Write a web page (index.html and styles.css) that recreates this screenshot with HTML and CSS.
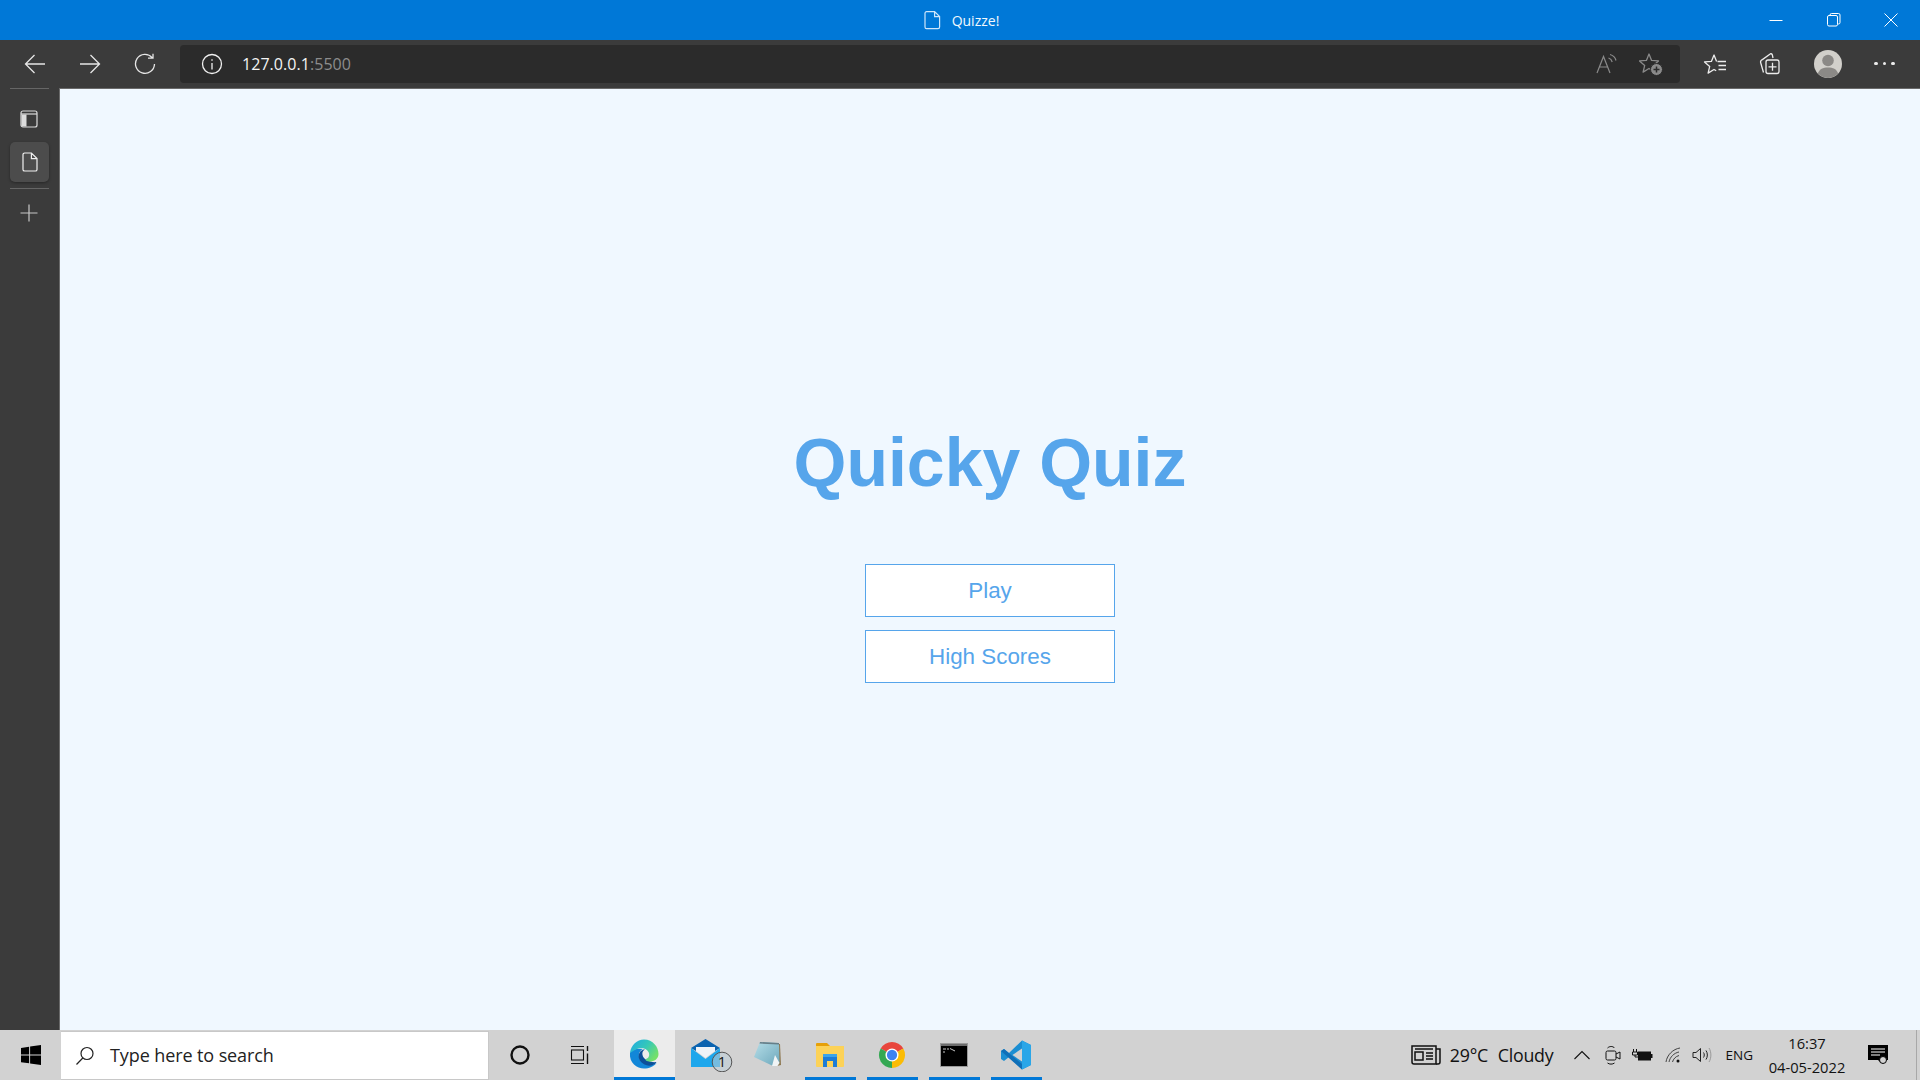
FILE: index.html
```html
<!DOCTYPE html>
<html lang="en">
<head>
<meta charset="utf-8">
<title>Quizze!</title>
<link rel="stylesheet" href="styles.css">
</head>
<body>
<header class="titlebar">
  <div></div>
  <div class="title-group">
    <svg width="18" height="20" viewBox="0 0 18 20" fill="none" stroke="#cfe6fa" stroke-width="1.2"><path d="M2.6 1.6h8l5 5V17a1.6 1.6 0 0 1-1.6 1.6H2.6A1.6 1.6 0 0 1 1 17V3.2a1.6 1.6 0 0 1 1.6-1.6zM10.6 1.600v5h5"/></svg>
    <span class="title-text">Quizze!</span>
  </div>
  <div class="win-controls">
    <span class="win-btn"><svg width="14" height="14" viewBox="0 0 14 14" stroke="#fff" fill="none"><path d="M0.5 7.5h13"/></svg></span>
    <span class="win-btn"><svg width="14" height="14" viewBox="0 0 14 14" stroke="#fff" fill="none"><rect x="0.5" y="2.5" width="10" height="10.5" rx="1.5"/><path d="M3 2.5V2A1.5 1.5 0 0 1 4.5 .5h7A1.500 1.500 0 0 1 13 2v7.500A1.500 1.500 0 0 1 11.500 11h-1"/></svg></span>
    <span class="win-btn"><svg width="14" height="14" viewBox="0 0 14 14" stroke="#fff" fill="none"><path d="M.5 .5l13 13M13.500 .5l-13 13"/></svg></span>
  </div>
</header>

<nav class="toolbar">
  <span class="nav-btn"><svg width="22" height="22" viewBox="0 0 22 22" fill="none" stroke="#e6e6e6" stroke-width="1.3"><path d="M21 11H1.5M10.5 2l-9 9 9 9"/></svg></span>
  <span class="nav-btn"><svg width="22" height="22" viewBox="0 0 22 22" fill="none" stroke="#e6e6e6" stroke-width="1.3"><path d="M1 11h19.5M11.500 2l9 9-9 9"/></svg></span>
  <span class="nav-btn"><svg width="22" height="22" viewBox="0 0 22 22" fill="none" stroke="#e6e6e6" stroke-width="1.3"><path d="M18.200 4.600A9.500 9.500 0 1 0 20.500 11M19 .8v4.400h-5"/></svg></span>
  <div class="address">
    <svg width="22" height="22" viewBox="0 0 22 22" fill="none" stroke="#f0f0f0" stroke-width="1.3"><circle cx="11" cy="11" r="9.5"/><path d="M11 10v6.500M11 6.200v1.600"/></svg>
    <span class="url">127.0.0.1<span class="port">:5500</span></span>
    <span class="address-spacer"></span>
    <svg width="22" height="22" viewBox="0 0 22 22" fill="none" stroke="#8a8a8a" stroke-width="1.2"><path d="M1 20L7.5 3.5 14 20M3.400 14h8.200M12.500 5c2 .6 3.200 2 3.700 4M14 1.500c3 .8 5.200 3 6 6"/></svg>
    <svg class="fav" width="24" height="24" viewBox="0 0 24 24" fill="none" stroke="#8a8a8a" stroke-width="1.3" stroke-linejoin="round"><path d="M10 2l2.600 6.400 6.900.5-5.200 4.500 1.600 6.700-5.900-3.600-5.900 3.600 1.600-6.700L.5 8.900l6.900-.5z"/><circle cx="17.500" cy="17.500" r="6" fill="#8a8a8a" stroke="#2b2b2b" stroke-width="1"/><path d="M17.500 14.500v6M14.500 17.500h6" stroke="#2b2b2b" stroke-width="1.5"/></svg>
  </div>
  <span class="tool-btn first"><svg width="24" height="22" viewBox="0 0 24 22" fill="none" stroke="#ececec" stroke-width="1.3" stroke-linejoin="round"><path d="M13.600 8.400L11 2 8.400 8.400l-6.900.5 5.200 4.500-1.600 6.700 5.900-3.600 2.200 1.300"/><path d="M14.500 8.500h8.500M15.500 12.500H23M15.500 16.500H23" stroke-width="1.500"/></svg></span>
  <span class="tool-btn"><svg width="22" height="22" viewBox="0 0 22 22" fill="none" stroke="#ececec" stroke-width="1.3"><path d="M5.500 19.500L2.700 9.800a2.500 2.500 0 0 1 1.700-3.200L11.800 1.200a1.500 1.500 0 0 1 2.500.5L15 5"/><rect x="8" y="7" width="13" height="13.500" rx="2"/><path d="M14.500 9.800v8M10.500 13.800h8"/></svg></span>
  <span class="avatar"><svg width="28" height="28" viewBox="0 0 28 28"><circle cx="14" cy="14" r="14" fill="#d2d0cb"/><circle cx="14" cy="10.500" r="5.800" fill="#8b8986"/><path d="M3.800 23.500C5.500 19 9 17.500 14 17.500s8.500 1.500 10.200 6A14 14 0 0 1 3.800 23.500z" fill="#8b8986"/></svg></span>
  <span class="dots"><i></i><i></i><i></i></span>
</nav>

<div class="workspace">
  <aside class="sidebar">
    <hr class="side-rule">
    <span class="side-ico first"><svg width="18" height="18" viewBox="0 0 18 18" fill="none" stroke="#dcdcdc" stroke-width="1.2"><rect x="1" y="1" width="16" height="16" rx="2"/><path d="M1 4h16"/><path d="M1.500 4.500h5v12h-4a1 1 0 0 1-1-1z" fill="#dcdcdc" stroke="none"/></svg></span>
    <span class="side-tab"><svg width="16" height="20" viewBox="0 0 16 20" fill="none" stroke="#f0f0f0" stroke-width="1.2"><path d="M2.600 1h6.800L15 6.600v10.800a1.600 1.600 0 0 1-1.600 1.600H2.600A1.600 1.600 0 0 1 1 17.400V2.600A1.600 1.600 0 0 1 2.600 1zM9.400 1v5.600H15"/></svg></span>
    <hr class="side-rule gap">
    <span class="side-ico plus"><svg width="18" height="18" viewBox="0 0 18 18" fill="none" stroke="#c8c8c8" stroke-width="1.2"><path d="M9 .5v17M.5 9h17"/></svg></span>
  </aside>
  <main class="page">
    <div class="home">
      <h1 class="quiz-title">Quicky Quiz</h1>
      <a class="quiz-btn">Play</a>
      <a class="quiz-btn">High Scores</a>
    </div>
  </main>
</div>

<footer class="taskbar">
  <span class="start"><svg width="20" height="20" viewBox="0 0 18 18" fill="#000"><path d="M0 2.600l7.300-1v7H0zM8.200 1.400L18 0v8.600H8.200zM0 9.500h7.300v7L0 15.500zM8.200 9.500H18V18l-9.800-1.300z"/></svg></span>
  <div class="search">
    <svg width="20" height="20" viewBox="0 0 20 20" fill="none" stroke="#222" stroke-width="1.2"><circle cx="12" cy="7.500" r="6"/><path d="M7.800 12L1.500 18.500"/></svg>
    <span class="search-text">Type here to search</span>
  </div>
  <span class="sys cortana"><svg width="20" height="20" viewBox="0 0 20 20" fill="none" stroke="#111" stroke-width="2.4"><circle cx="10" cy="10" r="8.500"/></svg></span>
  <span class="sys"><svg width="20" height="20" viewBox="0 0 20 20" fill="none" stroke="#111" stroke-width="1.1"><path d="M1 1.500h13M1 18.500h13"/><rect x="1.500" y="5" width="12" height="10"/><path d="M17.500 1v5M17.500 8.500V19" stroke-width="1.400"/></svg></span>

  <span class="app active"><svg width="30" height="30" viewBox="0 0 30 30"><defs><linearGradient id="eg" x1="0" y1="0" x2="1" y2=".6"><stop offset="0" stop-color="#1fa9e6"/><stop offset=".55" stop-color="#35c8b8"/><stop offset="1" stop-color="#74e06a"/></linearGradient></defs><path d="M1 14C0 24 8 29.500 15 29.500c5 0 10-2 12.500-5.500-3.500 2-7.500 2-10.500 1-5-1.500-8-6-7-10 .5-2.500 2-4 4-5C9 9 2 10 1 14z" fill="#1287d8"/><path d="M9.500 17c.5-5 4.500-7 6.500-6.500-3.500 1.500-3.500 6.500 0 9.500 3 2.500 8 3.500 11.500 3-2.500 4-8.500 4.500-12 2.500-4-2-6-5.500-6-8.500z" fill="#0c4f99"/><path d="M1 14C2 6 8 .5 15 .5 24 .5 29.500 8 29.500 15c0 5-4.500 7.500-8.500 7.500-3 0-5.500-1.500-4-2.500 3-1 4-4 2.500-7-2-3.500-7.500-5-11.500-3C5 11.500 2 13 1 14z" fill="url(#eg)"/></svg></span>
  <span class="app mail"><svg width="42" height="34" viewBox="0 0 42 34"><path d="M0 10L14.500 1 29 10l-5 3H5z" fill="#0a63b0"/><path d="M0 10l14.500 11L29 10v19H0z" fill="#1ea7ec"/><path d="M5 9h19v4l-9.500 7L5 13z" fill="#eef3f8"/><circle cx="31" cy="24" r="9.800" fill="rgba(190,205,215,.55)" stroke="#555" stroke-width="1"/><text x="31" y="29" class="badge-num" text-anchor="middle">1</text></svg></span>
  <span class="app"><svg width="30" height="28" viewBox="0 0 30 28"><defs><linearGradient id="np" x1="0" y1="0" x2="1" y2="1"><stop offset="0" stop-color="#b6dee8"/><stop offset="1" stop-color="#6ca7bb"/></linearGradient></defs><path d="M27 3l1 21-4 1 1-22z" fill="#8d7750"/><path d="M7 1l19 1 .5 20L20 25 1 16z" fill="url(#np)"/><path d="M7 1l19 1v1.500L6.500 2.500z" fill="#667e88"/><path d="M19 25l3-11 4.500 8-2 3z" fill="#f0f4f5"/></svg></span>
  <span class="app running"><svg width="28" height="24" viewBox="0 0 28 24"><path d="M0 1a1 1 0 0 1 1-1h10l3 3H0z" fill="#e6a008"/><path d="M0 3h28v20a1 1 0 0 1-1 1H1a1 1 0 0 1-1-1z" fill="#fcd257"/><path d="M7 14h14v10h-4v-6h-6v6H7z" fill="#1c7cd6"/><path d="M7 11h14v3H7z" fill="#3ba4ea"/></svg></span>
  <span class="app running"><svg width="28" height="28" viewBox="0 0 30 30"><path d="M15 15L2.900 8A14 14 0 0 1 27.100 8z" fill="#e8453c"/><path d="M15 15L27.100 8A14 14 0 0 1 15 29z" fill="#fbbc05"/><path d="M15 15V29A14 14 0 0 1 2.900 8z" fill="#34a853"/><circle cx="15" cy="15" r="7" fill="#fff"/><circle cx="15" cy="15" r="5.500" fill="#3f82f1"/></svg></span>
  <span class="app running"><svg width="28" height="24" viewBox="0 0 28 24"><rect x=".5" y=".5" width="27" height="23" fill="#000" stroke="#9a9a9a"/><rect x="1" y="1" width="26" height="2" fill="#6d6d6d"/><path d="M3 6h3M7 6h2M10 5.500l5 2.500M3 9h2" stroke="#c8c8c8" fill="none"/></svg></span>
  <span class="app running"><svg width="30" height="30" viewBox="0 0 30 30"><path d="M21 .5L30 5v20l-9 4.500-13-12.500L3 21l-3-2v-8l3-2 5 4z" fill="#1b8ed2"/><path d="M21 .5L30 5v20l-9 4.500z" fill="#2aa6e8"/><path d="M21 8.500L11.500 15l9.500 6.500z" fill="#d2d2d2"/><path d="M3 9l18 15v5.500L0 11z" fill="#0f6fb8"/></svg></span>

  <span class="tray-spacer"></span>

  <svg width="30" height="20" viewBox="0 0 30 20" fill="none" stroke="#111" stroke-width="1.5"><path d="M1 1h24v18H3a2 2 0 0 1-2-2z"/><path d="M25 4h4v13a2 2 0 0 1-2 2h-2"/><rect x="4" y="7" width="8" height="8"/><path d="M4 4h18M15 8h7M15 11h7M15 14h7"/></svg>
  <span class="weather temp">29°C</span>
  <span class="weather cond">Cloudy</span>
  <svg class="tray chevron" width="16" height="10" viewBox="0 0 16 10" fill="none" stroke="#111" stroke-width="1.1"><path d="M.5 9L8 1.500 15.500 9"/></svg>
  <svg class="tray meet" width="16" height="20" viewBox="0 0 16 20" fill="none" stroke="#111"><rect x="1" y="6" width="10" height="9" rx="1.5"/><path d="M11 9l4-2v7l-4-2M2.500 3C4.500 1 8 1 9.500 3M2.500 18c2 1.500 5 1.500 7 0"/></svg>
  <svg class="tray battery" width="21" height="13" viewBox="0 0 21 13"><path d="M1.500 0v3M4.500 0v3M.5 3h5v3h-5zM3 6v2h3" stroke="#111" fill="none"/><rect x="6" y="2.500" width="13" height="9" fill="#111"/><rect x="19" y="5" width="1.500" height="4" fill="#111"/></svg>
  <svg class="tray wifi" width="20" height="16" viewBox="0 0 20 16" fill="none" stroke="#333" stroke-width=".9"><path d="M1 15C2 8 8 2 15 1M4 15c1-5 5-9 10-10M7.500 15c.8-3 3-5.500 6.500-6.500"/><circle cx="13" cy="14" r="1.500" fill="#111" stroke="none"/></svg>
  <svg class="tray volume" width="20" height="16" viewBox="0 0 20 16" fill="none" stroke="#222"><path d="M1 5.500h3l4.500-4v13L4 10.500H1zM11.500 5.500c1 1.500 1 3.500 0 5M14 3.500c1.800 2.500 1.800 6.500 0 9"/><path d="M17 1c2.500 3.800 2.500 10.200 0 14" stroke="#999"/></svg>
  <span class="lang">ENG</span>
  <span class="clock"><span>16:37</span><span>04-05-2022</span></span>
  <svg class="notify" width="20" height="20" viewBox="0 0 20 20"><path d="M0 0h20v15h-5l-2 3-3-3H0z" fill="#000"/><path d="M3 4h14M3 7h14M3 10h9" stroke="#fff"/><circle cx="15" cy="15" r="3.500" fill="#d2d2d2" stroke="#000"/></svg>
  <span class="show-desktop"></span>
</footer>
</body>
</html>
```
FILE: styles.css
```css
* { box-sizing: border-box; }
html, body { height: 100%; }
body {
  margin: 0;
  height: 100vh;
  display: flex;
  flex-direction: column;
  overflow: hidden;
  font-family: "Open Sans", "Noto Sans", sans-serif;
  background: #f0f8ff;
}
svg { display: block; flex: none; }

.titlebar {
  height: 40px;
  flex: none;
  background: #0078d7;
  display: grid;
  grid-template-columns: 1fr auto 1fr;
  align-items: center;
  color: #f2f8fd;
}
.title-group { display: flex; align-items: center; gap: 10px; padding-left: 3px; }
.title-text { font-size: 14px; }
.win-controls { display: flex; justify-self: end; }
.win-btn { width: 57.5px; height: 40px; display: flex; align-items: center; justify-content: center; }

.toolbar {
  height: 48px;
  flex: none;
  background: #3b3b3b;
  display: flex;
  align-items: center;
  padding: 0 0 1px 7px;
}
.nav-btn { width: 55px; height: 40px; display: flex; align-items: center; justify-content: center; }
.address {
  width: 1500px;
  height: 38px;
  margin-left: 8px;
  margin-top: 1px;
  background: #2b2b2b;
  border-radius: 4px;
  display: flex;
  align-items: center;
  padding: 0 17px 0 21px;
}
.url { margin-left: 19px; color: #f4f4f4; font-size: 16px; letter-spacing: .05px; }
.port { color: #8d8d8d; }
.address-spacer { flex: 1; }
.fav { margin-left: 21px; }
.tool-btn { width: 55px; height: 40px; display: flex; align-items: center; justify-content: center; }
.tool-btn.first { margin-left: 7px; }
.tool-btn + .tool-btn { margin-left: -1px; }
.avatar { margin-left: 18px; }
.dots { margin-left: 32px; display: flex; gap: 5px; }
.dots i { width: 3.5px; height: 3.5px; border-radius: 50%; background: #ececec; }

.workspace { flex: 1; display: flex; min-height: 0; }
.sidebar {
  width: 60px;
  flex: none;
  background: #3b3b3b;
  border-right: 1px solid #6a6a6a;
  display: flex;
  flex-direction: column;
  align-items: flex-start;
  padding-left: 10px;
}
.side-rule { width: 39px; height: 1px; margin: 0; border: 0; background: #666; flex: none; }
.side-ico { display: flex; align-items: center; justify-content: center; width: 39px; margin-left: -1px; }
.side-ico.first { margin-top: 21px; }
.side-tab {
  width: 39px;
  height: 40px;
  margin-top: 14px;
  background: #4c4c4c;
  border-radius: 5px;
  box-shadow: 0 1px 3px rgba(0,0,0,.35);
  display: flex;
  align-items: center;
  justify-content: center;
}
.side-rule.gap { margin-top: 6px; }
.side-ico.plus { margin-top: 15px; }

.page {
  flex: 1;
  display: flex;
  align-items: flex-start;
  justify-content: center;
  padding-top: 327px;
  min-width: 0;
  border-top: 1px solid #6a6a6a;
}
.home { width: 250px; display: flex; flex-direction: column; align-items: center; }
.quiz-title {
  margin: 0 0 56px;
  font-family: "Liberation Sans", Arial, sans-serif;
  font-size: 68px;
  line-height: 92px;
  font-weight: 700;
  color: #56a5eb;
  white-space: nowrap;
}
.quiz-btn {
  width: 250px;
  height: 53px;
  margin-bottom: 13px;
  display: flex;
  align-items: center;
  justify-content: center;
  background: #fff;
  border: 1px solid #56a5eb;
  color: #56a5eb;
  font-family: "Liberation Sans", Arial, sans-serif;
  font-size: 22.4px;
}

.taskbar {
  height: 50px;
  flex: none;
  background: #d2d2d2;
  display: flex;
  align-items: center;
  color: #111;
}
.start { width: 61px; height: 50px; display: flex; align-items: center; justify-content: center; }
.search {
  width: 428px;
  height: 49px;
  margin-top: 1px;
  background: #fff;
  border: 1px solid #c8c8c8;
  border-left: 0;
  display: flex;
  align-items: center;
  padding-left: 14px;
}
.search-text { margin-left: 15px; margin-bottom: 2px; color: #222; font-size: 18px; letter-spacing: -.1px; }
.sys { width: 60px; height: 50px; display: flex; align-items: center; justify-content: center; }
.sys.cortana { margin-left: 1px; }
.app {
  width: 62px;
  height: 50px;
  display: flex;
  align-items: center;
  justify-content: center;
  position: relative;
  padding-right: 3px;
}
.app.active { width: 61px; margin-left: 4px; margin-right: 1px; background: #ececec; border-bottom: 3px solid #0078d7; padding-right: 1px; }
.app.mail { justify-content: flex-start; padding: 0 0 0 15px; }
.app.running::after {
  content: "";
  position: absolute;
  left: 5px;
  right: 6px;
  bottom: 0;
  height: 3px;
  background: #0078d7;
}
.badge-num { font: 14px "Open Sans", sans-serif; fill: #111; }
.tray-spacer { flex: 1; }
.weather { font-size: 17.8px; letter-spacing: -.2px; }
.temp { margin-left: 9px; }
.cond { margin-left: 9.5px; }
.tray { margin-left: 12px; }
.chevron { margin-left: 20px; }
.meet { margin-left: 15.5px; }
.battery { margin-left: 11px; }
.volume { margin-left: 6.5px; }
.lang { margin-left: 14px; font-size: 13.5px; }
.clock { margin-left: 9px; display: flex; flex-direction: column; align-items: center; font-size: 14.7px; line-height: 24px; width: 90px; }
.notify { margin-left: 16px; }
.show-desktop { width: 1px; height: 50px; margin-left: 28px; margin-right: 3px; background: #a8a8a8; }
```
